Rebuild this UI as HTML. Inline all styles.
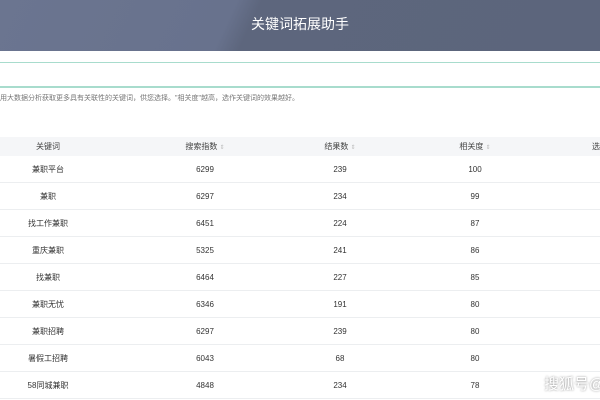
<!DOCTYPE html><html><head><meta charset="utf-8"><style>
body{margin:0;width:600px;height:400px;overflow:hidden;background:#fff;font-family:"Liberation Sans","Noto Sans CJK SC",sans-serif;position:relative}
.hd{position:absolute;left:0;top:0;width:600px;height:51px;background:linear-gradient(115deg,#6b7590 0%,#68728d 38%,#5d667d 42%,#5c657c 100%);color:#fff;font-size:14px;text-align:center;line-height:48px}
.ln{position:absolute;left:0;width:600px;height:1px;background:#a8dccd}
.tip{position:absolute;left:0;top:93px;font-size:7px;color:#777}
table{position:absolute;left:0;top:137px;border-collapse:collapse;font-size:8px;color:#333;table-layout:fixed}
td,th{height:26px;padding:0;text-align:center;border-bottom:1px solid #eceef0;font-weight:normal;white-space:nowrap;overflow:hidden}
th{height:19px;background:#f5f6f8;color:#444;border:none}
.s{color:#bbb;font-size:6px}
.wm{position:absolute;left:544px;top:373px;font-size:15px;color:#fff;text-shadow:0 0 2px #888;white-space:nowrap}
</style></head><body>
<div class="hd">关键词拓展助手</div>
<div class="ln" style="top:62px"></div>
<div class="ln" style="top:86px;height:2px"></div>
<div class="tip">用大数据分析获取更多具有关联性的关键词，供您选择。"相关度"越高，选作关键词的效果越好。</div>
<table>
<colgroup><col style="width:96px"><col style="width:218px"><col style="width:52px"><col style="width:218px"><col style="width:16px"></colgroup>
<tr><th>关键词</th><th>搜索指数 <span class="s">⇕</span></th><th>结果数 <span class="s">⇕</span></th><th>相关度 <span class="s">⇕</span></th><th style="text-align:right">选</th></tr>
<tr><td>兼职平台</td><td>6299</td><td>239</td><td>100</td><td></td></tr>
<tr><td>兼职</td><td>6297</td><td>234</td><td>99</td><td></td></tr>
<tr><td>找工作兼职</td><td>6451</td><td>224</td><td>87</td><td></td></tr>
<tr><td>重庆兼职</td><td>5325</td><td>241</td><td>86</td><td></td></tr>
<tr><td>找兼职</td><td>6464</td><td>227</td><td>85</td><td></td></tr>
<tr><td>兼职无忧</td><td>6346</td><td>191</td><td>80</td><td></td></tr>
<tr><td>兼职招聘</td><td>6297</td><td>239</td><td>80</td><td></td></tr>
<tr><td>暑假工招聘</td><td>6043</td><td>68</td><td>80</td><td></td></tr>
<tr><td>58同城兼职</td><td>4848</td><td>234</td><td>78</td><td></td></tr>
</table>
<div class="wm">搜狐号@</div>
</body></html>
